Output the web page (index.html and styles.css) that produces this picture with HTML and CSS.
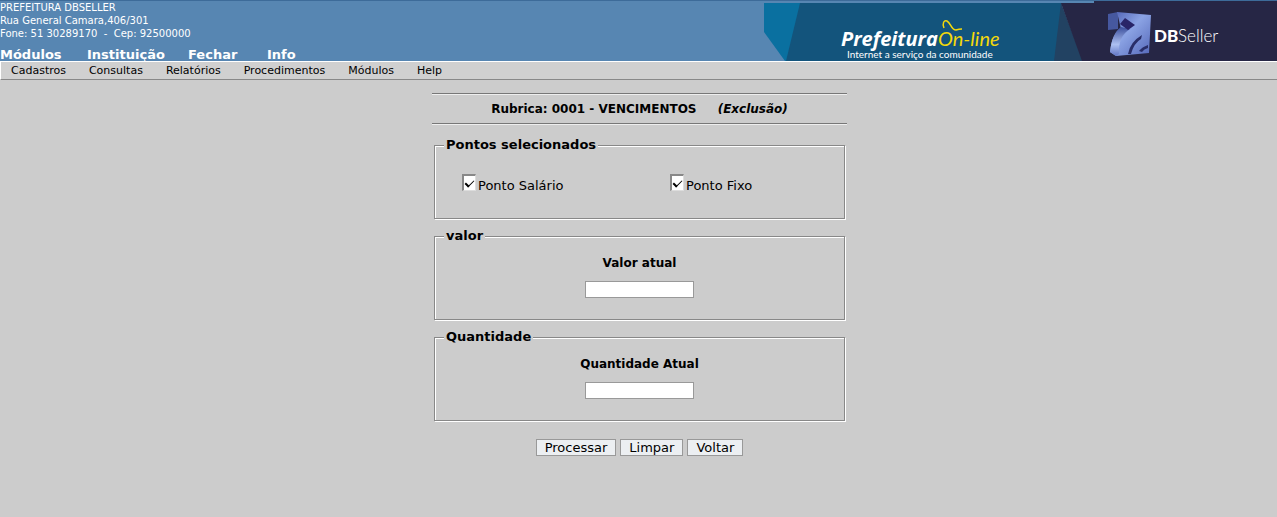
FILE: index.html
```html
<!DOCTYPE html>
<html lang="pt-BR">
<head>
<meta charset="utf-8">
<title>Prefeitura DBSeller</title>
<link rel="stylesheet" href="styles.css">
</head>
<body>
<header class="top">
  <div class="top-info">
    <address class="address">PREFEITURA DBSELLER<br>Rua General Camara,406/301<br>Fone: 51 30289170 &nbsp;-&nbsp; Cep: 92500000</address>
    <nav class="main-nav">
      <a href="#">Módulos</a><a href="#">Instituição</a><a href="#">Fechar</a><a href="#">Info</a>
    </nav>
  </div>
  <svg class="banner" viewBox="0 0 513 60" width="513" height="60" role="img" aria-label="Prefeitura On-line, DBSeller">
    <defs>
      <linearGradient id="cube" x1="0" y1="0" x2="1" y2="1">
        <stop offset="0" stop-color="#4a5cb0"/><stop offset=".45" stop-color="#8ba3e4"/><stop offset="1" stop-color="#5467b8"/>
      </linearGradient>
      <linearGradient id="side" x1="0" y1="0" x2="0" y2="1">
        <stop offset="0" stop-color="#3b4f9c"/><stop offset=".6" stop-color="#adc0f2"/><stop offset="1" stop-color="#6074c4"/>
      </linearGradient>
    </defs>
    <path d="M0 2H37L23 60H21L0 31Z" fill="#0a70a0"/>
    <path d="M36 2H298L291 60H22Z" fill="#13547c"/>
    <path d="M297 2L290 60H319Z" fill="#224262"/>
    <path d="M297 2H330V0H513V60H318Z" fill="#262645"/>
    <text class="brand" x="77" y="45">Prefeitura</text>
    <text class="online" x="174" y="45">On-line</text>
    <path d="M180 27C178 22 180 19 183 20C187 22 187 29 192 29C195 28 197 28 198 28" fill="none" stroke="#f5d90a" stroke-width="1.5"/>
    <text class="slogan" x="83" y="57">Internet a serviço da comunidade</text>
    <path d="M344 13L354 11V28L344 29Z" fill="#46589f"/>
    <path d="M353 11L387 14L385 52L352 55L346 51Q348 32 357 28Z" fill="url(#cube)"/>
    <path d="M346 51Q348 32 357 26L366 28Q354 35 355 53L352 55Z" fill="url(#side)"/>
    <path d="M361 17L371 24L364 29L356 23Z" fill="#292568"/>
    <path d="M364 53Q366 41 378 34L377 38Q370 42 367 53ZM375 50Q378 46 384 44V47Q380 48 378 51Z" fill="#292e68"/>
    <text class="db" x="390" y="41">DB</text>
    <text class="seller" x="414" y="41">Seller</text>
  </svg>
</header>
<nav class="sub-nav">
  <a href="#">Cadastros</a><a href="#">Consultas</a><a href="#">Relatórios</a><a href="#">Procedimentos</a><a href="#">Módulos</a><a href="#">Help</a>
</nav>
<main class="page">
  <form class="form">
    <hr class="rule">
    <h1 class="title">Rubrica: 0001 - VENCIMENTOS <em>(Exclusão)</em></h1>
    <hr class="rule">
    <div class="groups">
      <fieldset class="group points">
        <legend>Pontos selecionados</legend>
        <label class="check"><input type="checkbox" checked>Ponto Salário</label>
        <label class="check"><input type="checkbox" checked>Ponto Fixo</label>
      </fieldset>
      <fieldset class="group entry">
        <legend>valor</legend>
        <label for="valor">Valor atual</label>
        <input id="valor" type="text">
      </fieldset>
      <fieldset class="group entry">
        <legend>Quantidade</legend>
        <label for="quantidade">Quantidade Atual</label>
        <input id="quantidade" type="text">
      </fieldset>
    </div>
    <div class="actions">
      <button type="button">Processar</button>
      <button type="button">Limpar</button>
      <button type="button">Voltar</button>
    </div>
  </form>
</main>
</body>
</html>
```
FILE: styles.css
```css
* { box-sizing: border-box; }
body {
  margin: 0;
  background: #ccc;
  color: #000;
  font: 12px/16px "DejaVu Sans", sans-serif;
}
a { color: inherit; text-decoration: none; }
.top {
  display: flex;
  justify-content: space-between;
  border-top: 1px solid #3d6b99;
  background: #5786b2;
  color: #fff;
}
.address { font-size: 10px; line-height: 13px; font-style: normal; white-space: nowrap; }
.main-nav {
  display: grid;
  grid-template-columns: 87px 101px 79px auto;
  margin-top: 8px;
  font-size: 13px;
  line-height: 13px;
  font-weight: bold;
}
.banner { display: block; flex: none; }
.brand { font: italic bold 20px "Open Sans", sans-serif; fill: #fff; }
.online { font: italic 20px Lato, sans-serif; fill: #f5d90a; }
.slogan { font: 10px Lato, sans-serif; fill: #fff; }
.db { font: 900 17px Lato, sans-serif; fill: #fff; }
.seller { font: 300 17px Lato, sans-serif; fill: #fff; }
.sub-nav {
  display: flex;
  gap: 23px;
  padding: 0 10px;
  border: 1px solid #fff;
  border-right: 0;
  border-bottom-color: #888;
  background: #d0d0d0;
  font-size: 11px;
  line-height: 17px;
}
.page { padding: 13px 0 0 2px; }
.form { width: 415px; margin: 0 auto; }
.rule {
  margin: 0;
  border: 0;
  border-top: 1px solid #777;
  border-bottom: 1px solid #eee;
}
.title {
  margin: 6px 0;
  font-size: 12px;
  line-height: 16px;
  text-align: center;
}
.title em { margin-left: 17px; }
.groups { display: grid; gap: 9px; padding: 12px 2px 0; }
.group {
  min-width: 0;
  margin: 0;
  padding: 0 9px;
  border: 1px solid #888;
  box-shadow: 1px 1px 0 #fff, inset 1px 1px 0 #fff;
}
.group legend {
  padding: 0 2px;
  background: #ccc;
  font-size: 13px;
  line-height: 16px;
  font-weight: bold;
}
.points {
  display: grid;
  grid-template-columns: 208px auto;
  padding: 21px 0 20px 27px;
}
.points legend { margin-left: -18px; }
.check { display: flex; gap: 2px; font-size: 13px; line-height: 24px; }
.check input {
  appearance: none;
  width: 14px;
  height: 17px;
  margin: 0;
  border: 2px solid #888;
  border-right: 1px solid #ddd;
  border-bottom: 1px solid #ddd;
  background: #fff;
}
.check input:checked::before {
  content: "";
  display: block;
  width: 7px;
  height: 4px;
  margin: 4px 0 0 1px;
  border: solid #000;
  border-width: 0 0 1px 2px;
  transform: rotate(-45deg);
}
.entry { padding-bottom: 21px; text-align: center; }
.entry legend { margin-right: auto; }
.entry label { display: block; margin: 11px 0 10px; font-weight: bold; }
.entry input {
  display: block;
  width: 109px;
  height: 17px;
  margin: 0 auto;
  padding: 0 2px;
  border: 1px solid #999;
  background: #fff;
  font: inherit;
}
.actions { display: flex; justify-content: center; gap: 4px; margin-top: 18px; }
.actions button {
  height: 17px;
  padding: 0 8px;
  border: 1px solid #999;
  background: #eceff2;
  color: #000;
  font-family: inherit;
  font-size: 13px;
  line-height: 15px;
}
```
